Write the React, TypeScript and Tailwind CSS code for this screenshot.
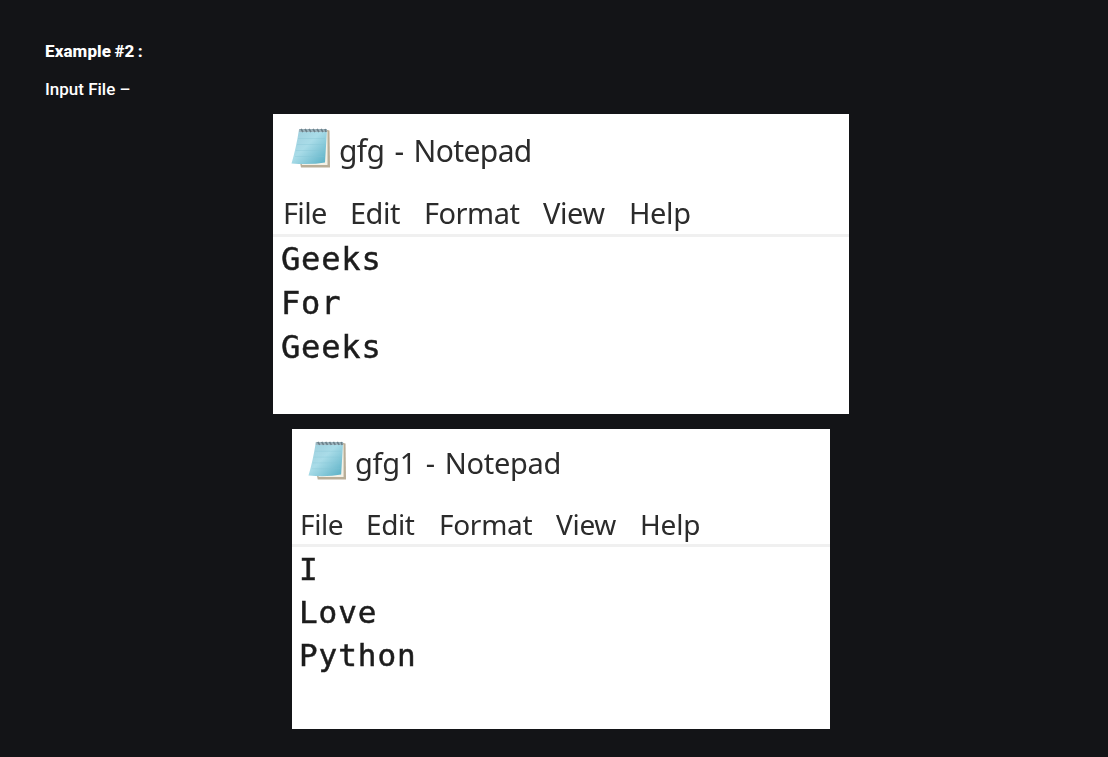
function NotepadIcon({ className }: { className: string }) {
  return (
    <svg viewBox="0 0 40 42" className={className} aria-hidden="true">
      <defs>
        <linearGradient id="sheet" x1="0" y1="0" x2="1" y2="1">
          <stop offset="0" stopColor="#9dcddc" />
          <stop offset="0.45" stopColor="#a9dce8" />
          <stop offset="1" stopColor="#56aec4" />
        </linearGradient>
      </defs>
      <path d="M34 3 L38.5 4 L39 41 L10 41 L9 36 Z" fill="#b9ae98" />
      <path d="M34 5 L36.5 5 L36.5 38.5 L11 38.5 L10 34 Z" fill="#f4f1e6" />
      <path d="M8 3 L36 3 L34 36 Q20 38.5 0.5 37 Q5 22 8 3 Z" fill="url(#sheet)" />
      <path d="M7 12 H34 M6 18 H34 M5 24 H33 M4 30 H33" stroke="#85c4d4" strokeWidth="0.7" opacity="0.5" />
      <path d="M8 4 H36" stroke="#9db4bd" strokeWidth="3" />
      <path d="M10 2.5 L12 5.5 M14 2.5 L16 5.5 M18 2.5 L20 5.5 M22 2.5 L24 5.5 M26 2.5 L28 5.5 M30 2.5 L32 5.5 M34 2.5 L35 5.5" stroke="#6b7f89" strokeWidth="1.6" />
    </svg>
  );
}

export default function App() {
  return (
    <main className="h-[757px] w-[1108px] overflow-hidden bg-[#131417] font-['Roboto',sans-serif] text-white">
      <h2 className="ml-[45px] pt-[39px] text-[17px] leading-6 font-extrabold tracking-[0.1px] [word-spacing:-1px]">Example #2 :</h2>
      <p className="mt-[14px] ml-[45px] text-[17px] leading-6 font-medium">Input File –</p>

      <section className="mt-[13px] ml-[273px] h-[300px] w-[576px] bg-white font-['Noto_Sans',sans-serif] text-[#2b2b2b]">
        <div className="flex flex-col blur-[0.45px]">
          <header className="flex h-[76px] shrink-0 pt-[12px] pl-[18px]">
            <NotepadIcon className="h-[43px] w-[40px]" />
            <span className="ml-[8px] pt-[3px] text-[30px] leading-[44px] tracking-[-0.6px] whitespace-pre [word-spacing:2.8px]">gfg - Notepad</span>
          </header>
          <nav className="flex h-[47px] shrink-0 border-b-3 border-[#f0f0f0] pl-[10px] text-[29px] leading-[46px]">
            <span className="w-[67px] tracking-[-0.7px]">File</span>
            <span className="w-[74px] tracking-[-0.5px]">Edit</span>
            <span className="w-[119px] tracking-[-0.5px]">Format</span>
            <span className="w-[86px] tracking-[-0.5px]">View</span>
            <span className="tracking-[-0.4px]">Help</span>
          </nav>
          <div className="pl-[8px] font-['DejaVu_Sans_Mono',monospace] text-[32px] leading-[44px] tracking-[0.85px] text-[#1c1c1c] [-webkit-text-stroke:0.5px_#1c1c1c]">
            <p>Geeks</p>
            <p>For</p>
            <p>Geeks</p>
          </div>
        </div>
      </section>

      <section className="mt-[15px] ml-[292px] h-[300px] w-[538px] bg-white font-['Noto_Sans',sans-serif] text-[#2b2b2b]">
        <div className="flex flex-col blur-[0.45px]">
          <header className="flex h-[73px] shrink-0 pt-[10px] pl-[16px]">
            <NotepadIcon className="h-[42px] w-[39px]" />
            <span className="ml-[8px] pt-[2px] text-[29px] leading-[44px] tracking-[-0.3px] whitespace-pre [word-spacing:2.6px]">gfg1 - Notepad</span>
          </header>
          <nav className="flex h-[45px] shrink-0 border-b-3 border-[#f0f0f0] pl-[8px] text-[28px] leading-[44px]">
            <span className="w-[66px] tracking-[-0.4px]">File</span>
            <span className="w-[73px] tracking-[-0.4px]">Edit</span>
            <span className="w-[117px] tracking-[-0.3px]">Format</span>
            <span className="w-[84px] tracking-[-0.3px]">View</span>
            <span className="tracking-[-0.2px]">Help</span>
          </nav>
          <div className="pt-px pl-[7px] font-['DejaVu_Sans_Mono',monospace] text-[31px] leading-[43px] tracking-[0.95px] text-[#1c1c1c] [-webkit-text-stroke:0.5px_#1c1c1c]">
            <p>I</p>
            <p>Love</p>
            <p>Python</p>
          </div>
        </div>
      </section>
    </main>
  );
}
